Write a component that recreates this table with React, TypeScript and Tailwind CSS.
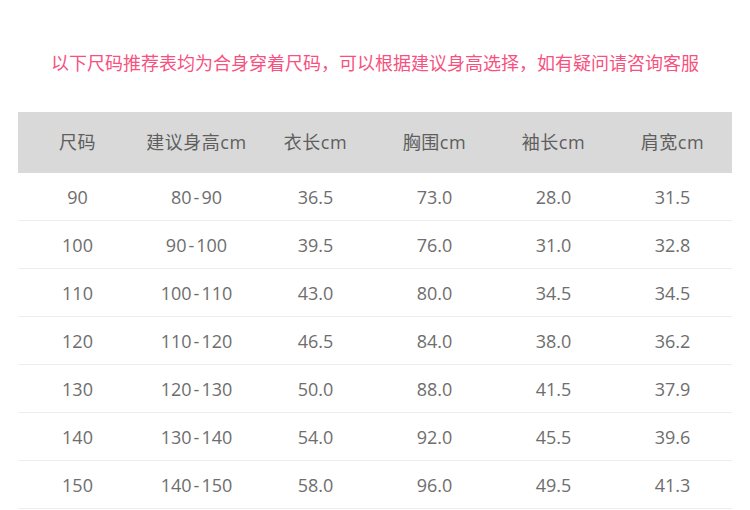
const headers = ["尺码", "建议身高cm", "衣长cm", "胸围cm", "袖长cm", "肩宽cm"];

const rows = [
  ["90", "80-90", "36.5", "73.0", "28.0", "31.5"],
  ["100", "90-100", "39.5", "76.0", "31.0", "32.8"],
  ["110", "100-110", "43.0", "80.0", "34.5", "34.5"],
  ["120", "110-120", "46.5", "84.0", "38.0", "36.2"],
  ["130", "120-130", "50.0", "88.0", "41.5", "37.9"],
  ["140", "130-140", "54.0", "92.0", "45.5", "39.6"],
  ["150", "140-150", "58.0", "96.0", "49.5", "41.3"],
];

function Cell({ text }: { text: string }) {
  const parts = text.split("-");
  if (parts.length < 2) return <>{text}</>;
  return (
    <>
      {parts[0]}
      <span className="px-[2px]">-</span>
      {parts[1]}
    </>
  );
}

export default function App() {
  return (
    <div
      className="w-[750px] h-[510px] bg-white overflow-hidden"
      style={{ fontFamily: '"Open Sans", "Noto Sans CJK SC", sans-serif' }}
    >
      <p className="pt-[49px] h-[112px] text-center text-[18px] leading-[28px] text-[#f7527f]">
        以下尺码推荐表均为合身穿着尺码，可以根据建议身高选择，如有疑问请咨询客服
      </p>
      <div className="mx-[18px] w-[714px]">
        <div className="grid grid-cols-6 h-[61px] items-center bg-[#d9d9d9] text-[18px] text-[#5e5e5e]">
          {headers.map((h) => (
            <div key={h} className="text-center tracking-[0.5px]">
              {h}
            </div>
          ))}
        </div>
        {rows.map((r) => (
          <div
            key={r[0]}
            className="grid grid-cols-6 h-[48px] items-center border-b border-[#eeeeee] text-[18px] text-[#6e6e6e]"
          >
            {r.map((c, i) => (
              <div key={i} className="text-center pt-[1px]">
                <Cell text={c} />
              </div>
            ))}
          </div>
        ))}
      </div>
    </div>
  );
}
